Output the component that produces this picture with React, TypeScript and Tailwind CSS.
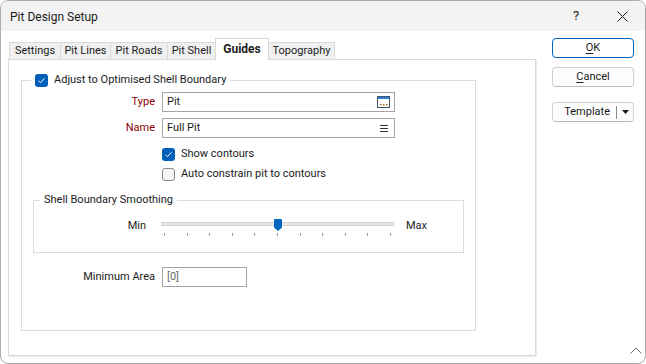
import React from "react"

function CheckBox({ checked }: { checked: boolean }) {
  if (!checked) {
    return <span className="block h-[13px] w-[13px] shrink-0 rounded-[3px] border border-[#8a8a8a] bg-[#f6f6f6]" />
  }
  return (
    <span className="flex h-[13px] w-[13px] shrink-0 items-center justify-center rounded-[3px] bg-[#005fb8]">
      <svg width="13" height="13" viewBox="0 0 13 13">
        <path d="M3.5 6.8 L5.5 8.7 L9.5 4.3" stroke="#ffffff" strokeWidth="1" fill="none" />
      </svg>
    </span>
  )
}

const tabs = [
  { label: "Settings", w: "w-[52px]" },
  { label: "Pit Lines", w: "w-[51px]" },
  { label: "Pit Roads", w: "w-[58px]" },
  { label: "Pit Shell", w: "w-[49px]" },
  { label: "Guides", w: "w-[54px]", active: true },
  { label: "Topography", w: "w-[67px]" },
]

export default function App() {
  return (
    <div className="flex h-[364px] w-[646px] flex-col overflow-hidden rounded-[8px] border border-[#ababab] bg-white font-[family-name:Roboto,sans-serif] text-[11px] text-[#1b1b1b]">
      {/* title bar */}
      <div className="flex h-[30px] shrink-0 items-center bg-[#f3f3f3] text-[12px]">
        <span className="flex-1 pl-[9px] pt-[1px]">Pit Design Setup</span>
        <span className="w-[46px] text-center text-[13px]">?</span>
        <span className="flex w-[46px] justify-center">
          <svg width="11" height="11" viewBox="0 0 11 11">
            <path d="M0.5 0.5 L10.5 10.5 M10.5 0.5 L0.5 10.5" stroke="#1b1b1b" strokeWidth="1" />
          </svg>
        </span>
      </div>

      <div className="flex flex-1 pl-[7px]">
        {/* left: tabs + panel */}
        <div className="flex w-[528px] flex-col pb-[7px] pt-[7px]">
          <div className="flex h-[22px] items-end pl-[1px]">
            {tabs.map((t, i) => (
              <div
                key={t.label}
                className={
                  t.active
                    ? `relative z-10 -ml-px flex h-[22px] items-center justify-center border border-b-0 border-[#d9d9d9] bg-white pb-[1px] text-[12px] font-bold ${t.w}`
                    : `flex h-[18px] items-center justify-center border border-b-0 border-[#d9d9d9] bg-[#f0f0f0] ${i === 0 ? "" : "-ml-px"} ${t.w}`
                }
              >
                {t.label}
              </div>
            ))}
          </div>

          <div className="-mt-px flex-1 border border-[#d9d9d9] bg-white pl-[12px] shadow-[1px_1px_0_#ececec]">
            <fieldset className="mt-[13px] h-[258px] w-[455px] border border-[#dcdcdc]">
              <legend className="ml-[9px] flex h-[14px] items-center gap-[6px] px-[4px]">
                <CheckBox checked />
                <span>Adjust to Optimised Shell Boundary</span>
              </legend>

              <div className="mt-[5px] grid grid-cols-[133px_233px] gap-x-[7px] gap-y-[6px]">
                <span className="self-center text-right text-[#8b0000]">Type</span>
                <div className="flex h-[20px] items-center justify-between border border-[#a5a5a5] bg-white pl-[4px] pr-[4px]">
                  <span>Pit</span>
                  <svg width="13" height="12" viewBox="0 0 13 12">
                    <rect x="0.5" y="0.5" width="12" height="11" fill="#ffffff" stroke="#3e5470" />
                    <rect x="1" y="1" width="11" height="2" fill="#2f7fd0" />
                    <rect x="3" y="8" width="1.5" height="1.5" fill="#9a6a1c" />
                    <rect x="6" y="8" width="1.5" height="1.5" fill="#9a6a1c" />
                    <rect x="9" y="8" width="1.5" height="1.5" fill="#9a6a1c" />
                  </svg>
                </div>
                <span className="self-center text-right text-[#8b0000]">Name</span>
                <div className="flex h-[20px] items-center justify-between border border-[#a5a5a5] bg-white pl-[4px] pr-[6px]">
                  <span>Full Pit</span>
                  <svg width="8" height="7" viewBox="0 0 8 7">
                    <path d="M0 0.5 H8 M0 3.5 H8 M0 6.5 H8" stroke="#333333" strokeWidth="1" />
                  </svg>
                </div>
              </div>

              <div className="ml-[140px] mt-[10px] flex flex-col gap-[7px]">
                <div className="flex h-[13px] items-center gap-[6px]">
                  <CheckBox checked />
                  <span>Show contours</span>
                </div>
                <div className="flex h-[13px] items-center gap-[6px]">
                  <CheckBox checked={false} />
                  <span>Auto constrain pit to contours</span>
                </div>
              </div>

              <fieldset className="ml-[11px] mt-[12px] h-[60px] w-[431px] border border-[#dcdcdc]">
                <legend className="ml-[6px] h-[14px] px-[4px] leading-[14px]">Shell Boundary Smoothing</legend>
                <div className="mt-[10px] flex">
                  <span className="mt-[2px] w-[112px] text-right leading-[14px]">Min</span>
                  <div className="relative ml-[15px] h-[20px] w-[233px]">
                    <div className="mt-[5px] h-[4px] border border-[#d4d4d4] bg-[#e6e6e6]" />
                    <div className="mt-[7px] flex justify-between px-[3px]">
                      {Array.from({ length: 11 }).map((_, i) => (
                        <span key={i} className="h-[3px] w-px bg-[#9a9a9a]" />
                      ))}
                    </div>
                    <svg className="absolute left-[113px] top-[2px]" width="8" height="12" viewBox="0 0 8 12">
                      <path d="M0 1 Q0 0 1 0 H7 Q8 0 8 1 V8.5 L4 12 L0 8.5 Z" fill="#0067c0" />
                    </svg>
                  </div>
                  <span className="ml-[12px] mt-[2px] leading-[14px]">Max</span>
                </div>
              </fieldset>

              <div className="mt-[14px] flex items-center">
                <span className="w-[133px] text-right">Minimum Area</span>
                <div className="ml-[7px] flex h-[20px] w-[85px] items-center border border-[#a5a5a5] bg-white pl-[4px] text-[#6d6d6d]">
                  [0]
                </div>
              </div>
            </fieldset>
          </div>
        </div>

        {/* right: buttons */}
        <div className="ml-[16px] flex flex-1 flex-col pt-[7px]">
          <button className="flex h-[20px] w-[82px] items-center justify-center rounded-[4px] border border-[#0067c0] bg-white">
            <span className="underline decoration-1 underline-offset-2">O</span>K
          </button>
          <button className="mt-[9px] flex h-[20px] w-[82px] items-center justify-center rounded-[4px] border border-[#d0d0d0] border-b-[#b8b8b8] bg-[#fdfdfd]">
            <span className="underline decoration-1 underline-offset-2">C</span>ancel
          </button>
          <div className="mt-[15px] flex h-[20px] w-[82px] items-center rounded-[4px] border border-[#d0d0d0] border-b-[#b8b8b8] bg-[#fdfdfd]">
            <span className="flex-1 pr-[6px] text-right">Template</span>
            <span className="h-[13px] w-px bg-[#8a8a8a]" />
            <span className="flex w-[16px] justify-center">
              <svg width="7" height="4" viewBox="0 0 7 4">
                <path d="M0 0 H7 L3.5 4 Z" fill="#1b1b1b" />
              </svg>
            </span>
          </div>
          <div className="mb-[9px] mr-[3px] mt-auto self-end">
            <svg width="12" height="7" viewBox="0 0 12 7">
              <path d="M0.5 6.5 L6 1 L11.5 6.5" stroke="#6f6f6f" strokeWidth="1" fill="none" />
            </svg>
          </div>
        </div>
      </div>
    </div>
  )
}
